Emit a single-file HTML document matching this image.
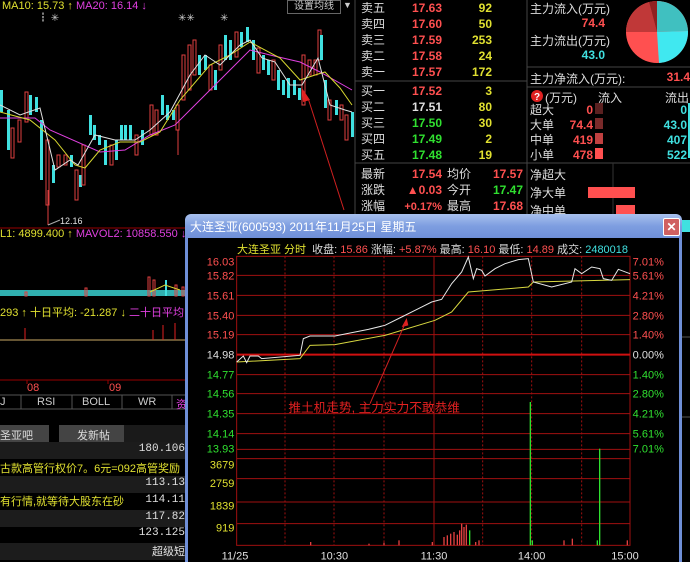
<!DOCTYPE html>
<html style="width:690px;height:562px;overflow:hidden"><head><meta charset="utf-8"><style>
*{margin:0;padding:0}
html,body{overflow:hidden}
body{width:690px;height:562px;background:#000;overflow:hidden;position:relative;font-family:"Liberation Sans","Noto Sans CJK SC",sans-serif;font-size:12px}
svg{display:block}
.a{position:absolute;white-space:nowrap}
.r{color:#ff5050}.g{color:#30e030}.y{color:#e0e030}.w{color:#e0e0e0}.c{color:#40e0e0}
</style></head><body>
<svg class="a" style="left:0;top:0" width="690" height="562">
<g stroke-width="1">
<rect x="0" y="90" width="3" height="22" fill="#40e0e0"/>
<rect x="7" y="110" width="3" height="40" fill="#40e0e0"/>
<rect x="11" y="128" width="3" height="30" fill="none" stroke="#e04040"/>
<rect x="18" y="120" width="3" height="22" fill="none" stroke="#e04040"/>
<rect x="25" y="92" width="3" height="30" fill="none" stroke="#e04040"/>
<rect x="29" y="95" width="3" height="20" fill="#40e0e0"/>
<rect x="35" y="97" width="3" height="15" fill="#40e0e0"/>
<rect x="40" y="120" width="3" height="60" fill="#40e0e0"/>
<rect x="46" y="140" width="3" height="65" fill="none" stroke="#e04040"/><line x1="48" y1="190" x2="48" y2="225" stroke="#e04040"/>
<rect x="52" y="165" width="3" height="18" fill="#40e0e0"/>
<rect x="57" y="155" width="3" height="12" fill="none" stroke="#e04040"/>
<rect x="64" y="155" width="3" height="10" fill="none" stroke="#e04040"/>
<rect x="70" y="155" width="3" height="12" fill="#40e0e0"/>
<rect x="75" y="170" width="3" height="30" fill="none" stroke="#e04040"/>
<rect x="79" y="175" width="3" height="12" fill="#40e0e0"/>
<rect x="82" y="145" width="3" height="40" fill="none" stroke="#e04040"/>
<rect x="89" y="115" width="3" height="20" fill="#40e0e0"/>
<rect x="93" y="125" width="3" height="15" fill="#40e0e0"/>
<rect x="98" y="135" width="3" height="10" fill="#40e0e0"/>
<rect x="104" y="140" width="3" height="25" fill="#40e0e0"/>
<rect x="110" y="145" width="3" height="20" fill="none" stroke="#e04040"/>
<rect x="115" y="140" width="3" height="20" fill="#40e0e0"/>
<rect x="120" y="125" width="3" height="15" fill="#40e0e0"/>
<rect x="124" y="125" width="3" height="15" fill="#40e0e0"/>
<rect x="129" y="125" width="3" height="15" fill="#40e0e0"/>
<rect x="135" y="135" width="3" height="20" fill="none" stroke="#e04040"/>
<rect x="141" y="130" width="3" height="15" fill="#40e0e0"/>
<rect x="150" y="105" width="3" height="30" fill="none" stroke="#e04040"/>
<rect x="155" y="110" width="3" height="25" fill="none" stroke="#e04040"/>
<rect x="161" y="95" width="3" height="20" fill="#40e0e0"/>
<rect x="166" y="105" width="3" height="15" fill="#40e0e0"/>
<rect x="172" y="110" width="3" height="10" fill="#40e0e0"/>
<rect x="176" y="105" width="3" height="25" fill="none" stroke="#e04040"/><line x1="178" y1="130" x2="178" y2="155" stroke="#e04040"/>
<rect x="182" y="55" width="3" height="45" fill="none" stroke="#e04040"/>
<rect x="188" y="45" width="3" height="45" fill="none" stroke="#e04040"/>
<rect x="193" y="40" width="3" height="35" fill="none" stroke="#e04040"/>
<rect x="198" y="55" width="3" height="20" fill="#40e0e0"/>
<rect x="204" y="55" width="3" height="15" fill="#40e0e0"/>
<rect x="209" y="65" width="3" height="25" fill="none" stroke="#e04040"/>
<rect x="214" y="70" width="3" height="20" fill="#40e0e0"/>
<rect x="219" y="45" width="3" height="25" fill="none" stroke="#e04040"/>
<rect x="224" y="35" width="3" height="25" fill="#40e0e0"/>
<rect x="229" y="40" width="3" height="20" fill="#40e0e0"/>
<rect x="235" y="32" width="3" height="25" fill="none" stroke="#e04040"/>
<rect x="240" y="32" width="3" height="15" fill="#40e0e0"/>
<rect x="246" y="27" width="3" height="15" fill="#40e0e0"/>
<rect x="252" y="40" width="3" height="20" fill="#40e0e0"/>
<rect x="257" y="48" width="3" height="25" fill="none" stroke="#e04040"/>
<rect x="262" y="55" width="3" height="15" fill="#40e0e0"/>
<rect x="267" y="60" width="3" height="15" fill="#40e0e0"/>
<rect x="272" y="60" width="3" height="20" fill="none" stroke="#e04040"/>
<rect x="277" y="70" width="3" height="20" fill="#40e0e0"/>
<rect x="282" y="80" width="3" height="15" fill="#40e0e0"/>
<rect x="287" y="78" width="3" height="20" fill="#40e0e0"/>
<rect x="293" y="80" width="3" height="15" fill="#40e0e0"/>
<rect x="298" y="88" width="3" height="12" fill="#40e0e0"/>
<rect x="302" y="55" width="3" height="50" fill="none" stroke="#e04040"/>
<rect x="308" y="60" width="3" height="15" fill="none" stroke="#e04040"/>
<rect x="314" y="60" width="3" height="15" fill="none" stroke="#e04040"/>
<rect x="318" y="30" width="3" height="30" fill="none" stroke="#e04040"/>
<rect x="320" y="35" width="3" height="25" fill="#40e0e0"/>
<rect x="324" y="80" width="3" height="28" fill="#40e0e0"/>
<rect x="328" y="100" width="3" height="20" fill="none" stroke="#e04040"/>
<rect x="335" y="100" width="3" height="15" fill="#40e0e0"/>
<rect x="340" y="105" width="3" height="15" fill="none" stroke="#e04040"/>
<rect x="345" y="115" width="3" height="25" fill="none" stroke="#e04040"/>
<rect x="351" y="112" width="3" height="25" fill="#40e0e0"/>
</g>
<polyline fill="none" stroke="#e040e0" stroke-width="1" points="0,118 35,118 50,130 100,152 125,150 150,135 175,125 200,100 230,70 250,50 270,55 300,62 320,72 352,90"/>
<polyline fill="none" stroke="#d8d830" stroke-width="1" points="0,112 30,120 55,140 75,165 85,168 100,150 120,142 140,142 160,132 180,100 210,65 230,55 250,42 280,58 300,80 315,75 325,72 340,88 352,105"/>
<polyline fill="none" stroke="#e0e0e0" stroke-width="1" points="0,105 20,115 40,108 55,170 70,160 78,165 95,135 115,140 135,140 150,130 170,112 190,75 205,55 220,65 240,45 250,40 262,58 275,62 290,85 302,85 318,58 330,105 345,110 352,112"/>
<text x="38" y="21" fill="#ccc" font-size="10">┇ ✳</text><text x="178" y="21" fill="#ccc" font-size="10">✳✳</text><text x="220" y="21" fill="#ccc" font-size="10">✳</text>
<polygon points="302,88 310,100 303,102" fill="#e02020"/>
<line x1="308" y1="98" x2="344" y2="210" stroke="#d02020"/>
<line x1="48" y1="225" x2="60" y2="220" stroke="#aaa"/>
<line x1="0" y1="228" x2="188" y2="228" stroke="#900"/>
<rect x="0" y="290" width="186" height="6" fill="#30b0b0"/>
<g stroke="#e04040" fill="none">
<rect x="25" y="292" width="2" height="4"/><rect x="85" y="288" width="2" height="8"/><rect x="148" y="277" width="2" height="19"/><rect x="153" y="280" width="2" height="16"/><rect x="175" y="285" width="2" height="11"/><rect x="182" y="287" width="2" height="9"/>
</g>
<rect x="165" y="280" width="2" height="16" fill="#40e0e0"/>
<polyline fill="none" stroke="#d8d830" points="150,292 165,285 180,290"/>
<line x1="0" y1="340" x2="186" y2="340" stroke="#ca6" stroke-width="1"/>
<g stroke="#e02020"><line x1="25" y1="328" x2="25" y2="340"/><line x1="153" y1="330" x2="153" y2="340"/><line x1="163" y1="325" x2="163" y2="340"/><line x1="175" y1="323" x2="175" y2="340"/></g>
<line x1="0" y1="380" x2="186" y2="380" stroke="#900"/>
<line x1="27" y1="380" x2="27" y2="384" stroke="#900"/><line x1="108" y1="380" x2="108" y2="384" stroke="#900"/>
<line x1="355" y1="81" x2="527" y2="81" stroke="#444"/><line x1="355" y1="163" x2="527" y2="163" stroke="#444"/>
<line x1="527" y1="0" x2="527" y2="215" stroke="#444"/><line x1="355" y1="0" x2="355" y2="215" stroke="#444"/>
<line x1="527" y1="67" x2="690" y2="67" stroke="#444"/><line x1="527" y1="87" x2="690" y2="87" stroke="#444"/><line x1="527" y1="163" x2="690" y2="163" stroke="#444"/>
<line x1="613" y1="163" x2="613" y2="215" stroke="#333"/>
<g transform="translate(657,32)">
<circle r="31" fill="#ff5050"/>
<path d="M0,0 L0,-31 A31,31 0 0 1 31,-1 Z" fill="#40c0c0"/>
<path d="M0,0 L31,-1 A31,31 0 0 1 2,31 Z" fill="#40e8f0"/>
<path d="M0,0 L-31,0 A31,31 0 0 1 -8,-30 Z" fill="#c03838"/>
<path d="M0,0 L-8,-30 A31,31 0 0 1 0,-31 Z" fill="#902020"/>
</g>
<rect x="595" y="103" width="8" height="11" fill="#5a2020"/><rect x="595" y="118" width="8" height="11" fill="#7a2a2a"/><rect x="595" y="133" width="8" height="11" fill="#c04040"/><rect x="595" y="148" width="8" height="11" fill="#ff5050"/>
<rect x="688" y="103" width="2" height="55" fill="#40e0e0"/>
<rect x="588" y="187" width="47" height="11" fill="#ff5050"/><rect x="616" y="205" width="19" height="10" fill="#ff5050"/>
<circle cx="537" cy="96" r="6" fill="#e02020"/><text x="534" y="100" fill="#fff" font-size="10" font-weight="bold">?</text>
<line x1="0" y1="395" x2="186" y2="395" stroke="#555"/><line x1="0" y1="409" x2="186" y2="409" stroke="#555"/>
<g stroke="#555"><line x1="21" y1="395" x2="21" y2="409"/><line x1="72" y1="395" x2="72" y2="409"/><line x1="122" y1="395" x2="122" y2="409"/><line x1="172" y1="395" x2="172" y2="409"/></g>
<rect x="0" y="425" width="49" height="17" fill="#444"/><rect x="59" y="425" width="65" height="17" fill="#444"/><rect x="124" y="425" width="64" height="17" fill="#1a1a1a"/>
<rect x="0" y="442" width="186" height="17" fill="#1c1c1c"/><rect x="0" y="476" width="186" height="17" fill="#1c1c1c"/><rect x="0" y="510" width="186" height="17" fill="#1c1c1c"/><rect x="0" y="543" width="186" height="17" fill="#1c1c1c"/>
<rect x="682" y="220" width="8" height="12" fill="#40e0e0"/>
<line x1="682" y1="337" x2="690" y2="337" stroke="#555"/><line x1="682" y1="417" x2="690" y2="417" stroke="#555"/>
</svg>

<div class="a y" style="left:2px;top:0px;font-size:11px">MA10: 15.73 ↑ <span style="color:#e040e0">MA20: 16.14 ↓</span></div>
<div class="a" style="left:287px;top:0;width:52px;height:12px;border:1px solid #666;color:#ccc;font-size:10px;text-align:center;line-height:12px">设置均线</div>
<div class="a" style="left:343px;top:0;color:#ccc;font-size:9px">▼</div>
<div class="a w" style="left:60px;top:216px;font-size:9px">12.16</div>
<div class="a y" style="left:0;top:228px;font-size:11px">L1: 4899.400 ↑ <span style="color:#e040e0">MAVOL2: 10858.550 ↓</span></div>
<div class="a y" style="left:0;top:304px;font-size:11px">293 ↑ 十日平均: -21.287 ↓ <span style="color:#e040e0">二十日平均</span></div>
<div class="a r" style="left:27px;top:382px;font-size:11px">08</div><div class="a r" style="left:109px;top:382px;font-size:11px">09</div>
<div class="a" style="left:0;top:396px;color:#ccc;font-size:11px">J</div><div class="a" style="left:37px;top:396px;color:#ccc;font-size:11px">RSI</div><div class="a" style="left:82px;top:396px;color:#ccc;font-size:11px">BOLL</div><div class="a" style="left:138px;top:396px;color:#ccc;font-size:11px">WR</div><div class="a" style="left:176px;top:396px;color:#e040e0;font-size:11px">资</div>
<div class="a" style="left:0;top:427px;color:#ddd;font-size:11px">圣亚吧</div><div class="a" style="left:77px;top:427px;color:#ddd;font-size:11px">发新帖</div>
<div class="a w" style="right:505px;top:443px;font-size:11px;font-family:'Liberation Mono',monospace">180.106</div>
<div class="a y" style="left:0;top:460px;font-size:11px">古款高管行权价7。6元=092高管奖励</div>
<div class="a w" style="right:505px;top:477px;font-size:11px;font-family:'Liberation Mono',monospace">113.13</div>
<div class="a y" style="left:0;top:493px;font-size:11px">有行情,就等待大股东在砂</div>
<div class="a w" style="right:505px;top:494px;font-size:11px;font-family:'Liberation Mono',monospace">114.11</div>
<div class="a w" style="right:505px;top:511px;font-size:11px;font-family:'Liberation Mono',monospace">117.82</div>
<div class="a w" style="right:505px;top:527px;font-size:11px;font-family:'Liberation Mono',monospace">123.125</div>
<div class="a w" style="right:505px;top:543px;font-size:11px">超级短</div>

<div class="a" style="left:361px;top:0;font-size:12px;line-height:16px;color:#ddd">卖五<br>卖四<br>卖三<br>卖二<br>卖一</div>
<div class="a r" style="left:382px;width:60px;text-align:right;top:0;line-height:16px;font-weight:bold">17.63<br>17.60<br>17.59<br>17.58<br>17.57</div>
<div class="a y" style="left:452px;width:40px;text-align:right;top:0;line-height:16px;font-weight:bold">92<br>50<br>253<br>24<br>172</div>
<div class="a" style="left:361px;top:83px;line-height:16px;color:#ddd">买一<br>买二<br>买三<br>买四<br>买五</div>
<div class="a" style="left:382px;width:60px;text-align:right;top:83px;line-height:16px;font-weight:bold"><span class="r">17.52</span><br><span class="w">17.51</span><br><span class="g">17.50</span><br><span class="g">17.49</span><br><span class="g">17.48</span></div>
<div class="a y" style="left:452px;width:40px;text-align:right;top:83px;line-height:16px;font-weight:bold">3<br>80<br>30<br>2<br>19</div>
<div class="a" style="left:361px;top:166px;line-height:16px;color:#ddd">最新<br>涨跌<br>涨幅</div>
<div class="a r" style="left:380px;width:62px;text-align:right;top:166px;line-height:16px;font-weight:bold">17.54<br>▲0.03<br><span style="font-size:11px">+0.17%</span></div>
<div class="a" style="left:447px;top:166px;line-height:16px;color:#ddd">均价<br>今开<br>最高</div>
<div class="a" style="left:480px;width:43px;text-align:right;top:166px;line-height:16px;font-weight:bold"><span class="r">17.57</span><br><span class="g">17.47</span><br><span class="r">17.68</span></div>
<div class="a" style="left:530px;top:0;color:#ddd">主力流入(万元)</div>
<div class="a r" style="left:560px;width:45px;text-align:right;top:16px;font-weight:bold">74.4</div>
<div class="a" style="left:530px;top:32px;color:#ddd">主力流出(万元)</div>
<div class="a c" style="left:560px;width:45px;text-align:right;top:48px;font-weight:bold">43.0</div>
<div class="a" style="left:530px;top:70px;color:#ddd">主力净流入(万元):</div>
<div class="a r" style="left:640px;width:50px;text-align:right;top:70px;font-weight:bold">31.4</div>
<div class="a" style="left:545px;top:89px;color:#ddd">(万元)</div><div class="a" style="left:598px;top:89px;color:#ddd">流入</div><div class="a" style="left:665px;top:89px;color:#ddd">流出</div>
<div class="a" style="left:530px;top:103px;line-height:15px;color:#ddd">超大<br>大单<br>中单<br>小单</div>
<div class="a r" style="left:555px;width:38px;text-align:right;top:103px;line-height:15px;font-weight:bold">0<br>74.4<br>419<br>478</div>
<div class="a c" style="left:640px;width:47px;text-align:right;top:103px;line-height:15px;font-weight:bold">0<br>43.0<br>407<br>522</div>
<div class="a" style="left:530px;top:166px;line-height:18px;color:#ddd">净超大<br>净大单<br>净中单</div>

<div class="a" style="left:185px;top:214px;width:497px;height:348px;background:linear-gradient(#a8c0ee,#7e9ee0 12px,#6f8fd8 24px);border-radius:6px 6px 0 0"></div>
<div class="a" style="left:190px;top:218px;color:#fff;font-size:12px">大连圣亚(600593) 2011年11月25日 星期五</div>
<div class="a" style="left:663px;top:218px;width:15px;height:16px;background:#d06060;border:1px solid #fff;border-radius:2px;color:#fff;font-size:12px;font-weight:bold;text-align:center;line-height:16px">✕</div>
<div class="a" style="left:188px;top:238px;width:491px;height:324px;background:#000"></div>
<div class="a" style="left:237px;top:241px;font-size:11px;color:#ddd"><span class="y">大连圣亚 分时</span>&nbsp; 收盘: <span class="r">15.86</span> 涨幅: <span class="r">+5.87%</span> 最高: <span class="r">16.10</span> 最低: <span class="r">14.89</span> 成交: <span class="c">2480018</span></div>
<svg class="a" style="left:185px;top:212px" width="505" height="350" viewBox="0 0 1515 1050">
<g stroke="#a01010" stroke-width="3">
<rect x="155" y="133" width="1180" height="867" fill="none"/>
<line x1="155" y1="190" x2="1335" y2="190"/><line x1="155" y1="250" x2="1335" y2="250"/><line x1="155" y1="310" x2="1335" y2="310"/><line x1="155" y1="368" x2="1335" y2="368"/>
<line x1="155" y1="488" x2="1335" y2="488"/><line x1="155" y1="545" x2="1335" y2="545"/><line x1="155" y1="605" x2="1335" y2="605"/><line x1="155" y1="665" x2="1335" y2="665"/><line x1="155" y1="712" x2="1335" y2="712"/>
<line x1="155" y1="740" x2="1335" y2="740"/><line x1="155" y1="800" x2="1335" y2="800"/><line x1="155" y1="870" x2="1335" y2="870"/><line x1="155" y1="935" x2="1335" y2="935"/>
<line x1="747" y1="133" x2="747" y2="1000"/><line x1="1040" y1="133" x2="1040" y2="1000" stroke-dasharray="6,6"/>
<line x1="300" y1="133" x2="300" y2="1000" stroke-dasharray="6,6"/><line x1="447" y1="133" x2="447" y2="1000" stroke-dasharray="6,6"/><line x1="597" y1="133" x2="597" y2="1000" stroke-dasharray="6,6"/><line x1="893" y1="133" x2="893" y2="1000" stroke-dasharray="6,6"/><line x1="1190" y1="133" x2="1190" y2="1000" stroke-dasharray="6,6"/>
</g>
<line x1="155" y1="428" x2="1335" y2="428" stroke="#d01010" stroke-width="6"/>
<polyline fill="none" stroke="#d8d840" stroke-width="3" points="155,450 345,440 375,400 450,398 600,370 750,325 800,300 850,240 1030,225 1045,210 1335,203"/>
<polyline fill="none" stroke="#e8e8e8" stroke-width="3" points="155,450 175,432 185,452 195,432 220,432 230,440 345,430 355,380 375,372 450,372 550,352 600,340 650,315 700,290 740,270 770,262 800,215 830,180 850,135 865,200 875,170 890,175 900,192 930,170 960,155 1000,143 1030,140 1045,210 1100,225 1160,210 1170,170 1190,185 1220,165 1245,170 1255,200 1280,205 1300,172 1335,185"/>
<polygon points="665,318 650,345 670,340" fill="#e02020"/>
<line x1="660" y1="335" x2="555" y2="575" stroke="#d02020" stroke-width="3"/>
<text x="310" y="600" fill="#e02020" font-size="38" font-family="Liberation Sans,Noto Sans CJK SC,sans-serif">推土机走势, 主力实力不敢恭维</text>
<g fill="#e04040">
<rect x="375" y="990" width="4" height="10"/>
<rect x="550" y="995" width="4" height="5"/><rect x="595" y="992" width="4" height="8"/><rect x="640" y="985" width="4" height="15"/><rect x="740" y="990" width="4" height="10"/>
<rect x="775" y="975" width="4" height="25"/><rect x="785" y="970" width="4" height="30"/><rect x="795" y="965" width="4" height="35"/><rect x="805" y="960" width="4" height="40"/><rect x="815" y="968" width="4" height="32"/><rect x="822" y="955" width="4" height="45"/><rect x="828" y="935" width="4" height="65"/><rect x="835" y="945" width="4" height="55"/><rect x="842" y="938" width="4" height="62"/><rect x="870" y="990" width="4" height="10"/><rect x="880" y="985" width="4" height="15"/><rect x="1135" y="985" width="4" height="15"/><rect x="1160" y="980" width="4" height="20"/><rect x="1325" y="985" width="4" height="15"/>
</g>
<g fill="#30e030">
<rect x="1034" y="570" width="4" height="430"/><rect x="1242" y="710" width="4" height="290"/><rect x="852" y="955" width="4" height="45"/><rect x="1040" y="985" width="4" height="15"/><rect x="1235" y="985" width="4" height="15"/>
</g>
<g font-family="Liberation Sans,sans-serif" font-size="33" text-anchor="end">
<text x="148" y="160" fill="#ff5050">16.03</text><text x="148" y="202" fill="#ff5050">15.82</text><text x="148" y="262" fill="#ff5050">15.61</text><text x="148" y="322" fill="#ff5050">15.40</text><text x="148" y="380" fill="#ff5050">15.19</text><text x="148" y="440" fill="#e0e0e0">14.98</text>
<text x="148" y="500" fill="#30e030">14.77</text><text x="148" y="557" fill="#30e030">14.56</text><text x="148" y="617" fill="#30e030">14.35</text><text x="148" y="677" fill="#30e030">14.14</text><text x="148" y="722" fill="#30e030">13.93</text>
<text x="148" y="770" fill="#e0e030">3679</text><text x="148" y="825" fill="#e0e030">2759</text><text x="148" y="893" fill="#e0e030">1839</text><text x="148" y="958" fill="#e0e030">919</text>
</g>
<g font-family="Liberation Sans,sans-serif" font-size="33">
<text x="1343" y="160" fill="#ff5050">7.01%</text><text x="1343" y="202" fill="#ff5050">5.61%</text><text x="1343" y="262" fill="#ff5050">4.21%</text><text x="1343" y="322" fill="#ff5050">2.80%</text><text x="1343" y="380" fill="#ff5050">1.40%</text><text x="1343" y="440" fill="#e0e0e0">0.00%</text>
<text x="1343" y="500" fill="#30e030">1.40%</text><text x="1343" y="557" fill="#30e030">2.80%</text><text x="1343" y="617" fill="#30e030">4.21%</text><text x="1343" y="677" fill="#30e030">5.61%</text><text x="1343" y="722" fill="#30e030">7.01%</text>
</g>
<g font-family="Liberation Sans,sans-serif" font-size="33" fill="#e0e0e0" text-anchor="middle">
<text x="150" y="1043">11/25</text><text x="448" y="1043">10:30</text><text x="747" y="1043">11:30</text><text x="1040" y="1043">14:00</text><text x="1320" y="1043">15:00</text>
</g>
</svg>
</body></html>
